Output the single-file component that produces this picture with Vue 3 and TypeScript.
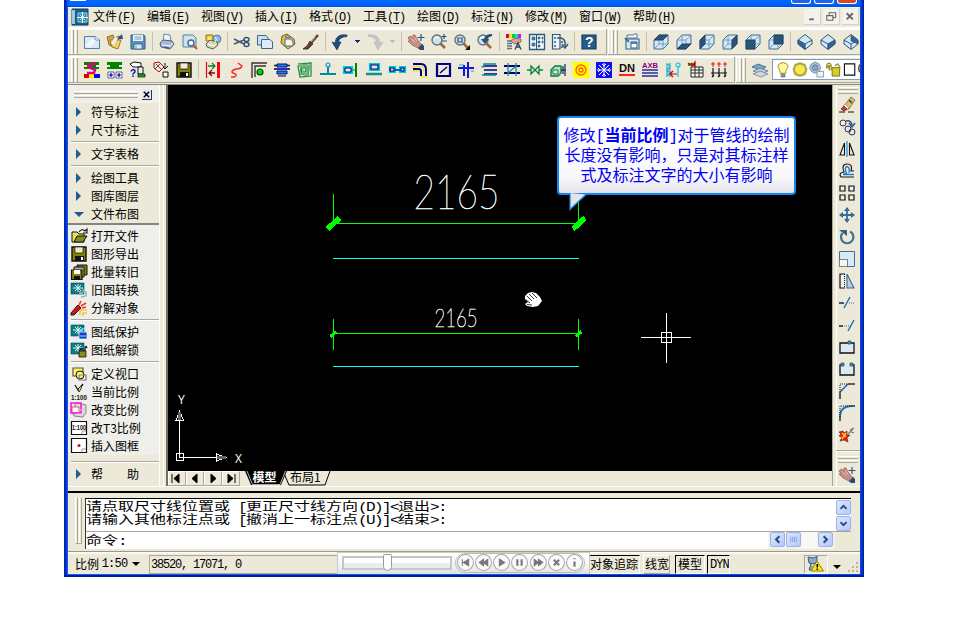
<script setup lang="ts">
import { h } from 'vue'

type Path = [string, string, string?, number?]
type Label = { t: string; x: number; y: number; s: number; f: string }
type Shape = Path | Label

const K = '#111'
const B = '#2c5680'
const N = '#000084'
const C = '#00c8dc'
const G = '#008400'
const T = '#1f8a8a'
const L = '#d5e6f5'
const O = '#848200'
const no = 'none'

const boxBase: Path = ['M1 6L6 1H15V10L10 15H1Z', L, '#3a6d9a', 1]
const boxLines: Path = ['M1 6H10V15M10 6L15 1M6 1V10H15M6 10L1 15', no, '#5f8fb8', 0.8]
const box = (d: string): Shape[] => [boxBase, boxLines, [d, '#2b5478', '#1d4164', 0.8]]
const gem = (d: string): Shape[] => [
  ['M8 0.5L15 6V10L8 15.5L1 10V6Z', L, B, 1],
  ['M1 6L8 10L15 6M8 10V15', no, B, 1],
  [d, '#34658f', B, 0.6],
]
const hand: Shape[] = [
  ['M1 3L3 2L5 5L5 1H7L9 5L13 10L15 11L12 15L8 13L4 11L0 7H2L0 4Z', '#c98f86', '#93564e', 0.7],
  ['M3 4L7 8M6 3L9 7', no, '#efc8bc', 0.8],
  ['M10 14L14 10L16 12V16H12Z', '#264f78'],
  ['M13 0V7M9.5 3.5H16.5', no, B, 1.2],
]
const lens: Shape[] = [
  ['M9 9L14 14', no, '#a06b3d', 2.6],
  ['M1 6A5 5 0 1 0 11 6A5 5 0 1 0 1 6', '#cfe0ec', '#60737e', 1.4],
  ['M3 5Q5 2 8 4', no, '#fff', 1.2],
]
const drawingBase: Shape[] = [
  ['M0 1H13V12H0Z', '#087f84', '#063f60', 0.6],
  ['M2 6H12M7 2V10M4 3L10 9M10 3L4 9', no, '#fff', 0.9],
]

const icons: Record<string, Shape[]> = {
  app: [
    ['M0 0H16V16H0Z', '#17618c', '#173b54', 1],
    ['M0 1H3V15H0Z', '#9fc8dc'],
    ['M6 4H15V13H6Z', '#1a91bd', '#c9eef7', 0.8],
    ['M10.500 3V14M5 8.500H16', no, '#fff', 1.2],
    ['M8 6L13 11M13 6L8 11', no, '#d8f2fa', 0.8],
  ],
  new: [['M0.500 2.500H11L15.500 6V14.500H0.500Z', '#dbe9f5', '#55809f', 1], ['M11 2.500V6H15.500', '#f7fbff', '#55809f', 0.8], ['M1 12L8 4L12 7L6 14Z', '#f0f7fc']],
  open: [['M0 3L6 1L7 4L13 2L9 14L2 11Z', '#d5a43b', '#765b20', 0.8], ['M3 6L14 6L11 15L5 13Z', '#f1ce69', '#765b20', 0.7], ['M10 5L15 0L16 5Z', '#245680'], ['M4 9L8 3L11 4L7 11Z', '#edf4f7']],
  save: [['M1 1H14L15 3V15H1Z', '#5a8fc2', '#315e87', 1], ['M3 1H13V7H3Z', '#e8f3fa'], ['M4 10H12V15H4Z', '#dce9f4', '#315e87', 0.8], ['M4.500 3H11.500M4.500 5H11.500M6 11V15', no, '#5b85a8', 0.8]],
  print: [['M4 7L5 0L11 1L12 7Z', '#e6eef9', '#55708f', 0.8], ['M1 9L4 6L13 7L15 10L11 15L2 13Z', '#aab8d3', '#4d5f81', 1], ['M3 11L11 12L14 9M6 3H10', no, '#fff', 1], ['M5 13L10 14', no, '#3f5d8b', 1.3]],
  preview: [['M1 1H11L14 4V13H1Z', '#cfe2f1', '#55809f', 1], ['M6 9A3 3 0 1 0 12 9A3 3 0 1 0 6 9', '#eff8fd', '#456b86', 1.4], ['M11 11L15 15', no, '#9b613b', 2]],
  publish: [['M1 1H8V7H1Z', '#f8cf20', '#725a1c', 0.8], ['M8 5A4 4 0 1 0 16 5A4 4 0 1 0 8 5', '#86bbdf', '#416b94', 0.8], ['M1 10L5 6L12 8L13 11L8 15L2 13Z', '#dfd6a8', '#555d75', 1], ['M3 10L9 12L11 10M10 3Q13 5 10 8', no, '#fff', 1], ['M3 3L6 6M6 3L3 6', no, '#fff', 0.8]],
  cut: [['M0 5L10 10M0 10L10 6', no, '#46586d', 1.5], ['M10 10.500A2.500 2 0 1 0 15 10.500A2.500 2 0 1 0 10 10.500M10 5.500A2.500 2 0 1 0 15 5.500A2.500 2 0 1 0 10 5.500', no, '#2f4e77', 1.4]],
  copy: [['M0.500 1.500H9L11 4V11H0.500Z', '#cadff0', '#3d6788', 1], ['M4.500 5.500H13L15.500 8V14.500H4.500Z', '#deecf8', '#3d6788', 1]],
  paste: [['M2 2L7 0L14 5L15 10L8 15L1 9Z', '#e5b843', '#74602d', 1], ['M5 5H11L13 8V12H5Z', '#edf5fa', '#4d6f88', 1], ['M5 3L8 1L10 4Z', '#bcc4ce', '#5c5f66', 0.7]],
  brush: [['M15 1L8 9', no, '#5a4b43', 2.6], ['M7 7L10 10L5 15L0 15L4 12Z', '#6a4026', '#3b2418', 0.8], ['M12 3L8 8', no, '#d2b69e', 1]],
  undo: [['M15 1Q4 -1 3 9L0 8L5 16L9 8L6.500 8Q7 3 15 2.500Z', '#214c80', '#19385f', 0.7]],
  redo: [['M1 1Q12 -1 13 9L16 8L11 16L7 8L9.500 8Q9 3 1 2.500Z', '#c2c5c9', '#b7b8b5', 0.6]],
  hand,
  zoomrt: [...lens, ['M13 0V5M10.500 2.500H15.500M11 7H16', no, '#2b557d', 1.2]],
  zoomwin: [...lens, ['M4 4H8V8H4Z', no, '#234f77', 1.2], ['M16 11V16H11Z', K]],
  zoomprev: [...lens, ['M15 0Q8 0 7 5H4L8 10L12 5H10Q11 3 15 2Z', '#244f77']],
  props: [['M0 0H3V4H0Z', '#e00055'], ['M3 0H6V4H3Z', '#e8ed08'], ['M6 0H9V4H6Z', '#0bcf28'], ['M9 0H12V4H9Z', '#09dce4'], ['M12 0H15V4H12Z', '#c020f0'], ['M1 7H6M1 9.500H6M1 12H6M1 14.500H6', no, '#5c738a', 1.4], ['M4 7L9 4L15 5V8L9 10Z', '#dfa094', '#875449', 0.8], ['M9 15.500L12 9L15 15.500M10 13H14', no, '#234e76', 1.4]],
  dcenter: [['M0.500 0.500H15.500V15.500H0.500Z', '#f5f8fa', '#285982', 1.3], ['M3 3H6V6H3ZM3 9H6V12H3ZM9 3H11V5H9ZM13 3H14V5H13ZM9 7H11V9H9ZM13 7H14V9H13ZM9 11H11V13H9Z', '#56829f', '#285982', 0.6], ['M7.500 1V15', no, '#285982', 1]],
  palette: [['M0.500 0.500H8V15H0.500Z', '#eef3f7', '#285982', 1.2], ['M2 3H4V5H2ZM2 7H4V9H2ZM2 11H4V13H2Z', '#5885a3'], ['M5 4H9Q14 5 13 12M10 10L13 14L16 10', no, '#285982', 1.4], ['M9 7H11V9H9ZM9 12H11V14H9Z', '#777']],
  help: [['M1 1H15V15H1Z', '#245d8c', '#173c5c', 1.2], { t: '?', x: 4, y: 13, s: 14, f: '#fff' }],
  viewname: [['M3 1H9L11 0H13V4H3Z', '#f6f8fa', '#446c8b', 0.9], ['M2 5H15V15H2Z', '#d8e7f2', '#2f6289', 1.1], ['M7 8H13V14H7Z', '#fff', '#2f6289', 1], ['M1 4L5 8M7 9H13', no, '#2f6289', 1.7]],
  top: box('M1 6L6 1H15L10 6Z'), bottom: box('M1 15L6 10H15L10 15Z'), left: box('M1 6L6 1V10L1 15Z'),
  right: box('M10 6L15 1V10L10 15Z'), front: box('M1 6H10V15H1Z'), back: box('M6 1H15V10H6Z'),
  isoA: gem('M1 6L8 10V15.500L1 10Z'), isoB: gem('M8 10L15 6V10L8 15.500Z'), isoC: gem('M8 1L15 6V10L8 7Z'),

  sys: [['M0 0H15V3H12V5H15V7H0V5H3V3H0Z', G], ['M0 12H5V16H0Z', '#e00000'], ['M5 12H10V16H5Z', '#ffef00'], ['M10 12H16V16H10Z', '#0808d8'], ['M12 2H6L4 5L11 8L10 11H3', no, '#df0088', 2.4]],
  grpadd: [['M0 0H15V3H12V5H15V7H0V5H3V3H0Z', G], ['M1 10H7V16H1ZM9 10H15V16H9Z', '#fff', N, 0.6], ['M4 11V15M2 13H6M12 11V15M10 13H14', no, N, 1.2]],
  query: [['M0 2L4 0L11 1V5H3Z', '#fff', K, 1], ['M8 5H13V12H8Z', '#eee', K, 1], ['M8 12H15V15H8Z', '#1ba323', K, 0.7], { t: '?', x: 0, y: 15, s: 10, f: '#0000c8' }],
  swap: [['M1 1L6 0L11 5L6 10L1 6Z', no, '#c40000', 1], ['M3 2L8 7M7 2L2 7', no, '#555', 1], ['M12 1V7M10 5L12 7L15 4', no, K, 1], ['M10 10H15V15H10Z', '#f6f5ed', K, 1]],
  disk: [['M1 1H15V15H1Z', O, K, 1.4], ['M4 1H12V7H4Z', '#ece9d8', K, 0.7], ['M4 10H13V15H4Z', K], ['M10 11H12V14H10Z', '#fff']],
  gate: [['M1.500 0V16', no, '#e00018', 1.2], ['M12 0H15V16H12Z', '#ff0018'], ['M3 4H10M7 1L10 4L7 7', no, '#168117', 1.3], ['M10 11H4M7 8L4 11L7 14', no, '#850000', 1.3]],
  snake: [['M10 1L14 4Q13 7 8 7Q2 9 5 11Q11 13 6 15H3', no, '#f52d25', 1.5]],
  corner: [['M1 16V1H16M4 15V4H15', no, '#353535', 1.4], ['M6 10A3 3 0 1 0 12 10A3 3 0 1 0 6 10', '#00d51b', '#004800', 1.2]],
  stack: [['M3 2H13V5H3Z', '#1687ee', N, 1], ['M0 3.500H3M13 3.500H16', no, '#222', 1.3], ['M0 7H16', no, N, 1.6], ['M3 9H13V12H3Z', '#1187e2', '#000a8c', 1], ['M4 14H12', no, '#333', 1.3]],
  coil: [['M1 2L14 1V14L3 15L1 4H11V12H5L4 6H9V10H6', no, '#158932', 1.2], ['M2 2L13 3L11 14L3 12L4 5H9L8 10H6V7', no, '#34a25c', 0.8]],
  tee: [['M0 12H16M8 12V5', no, '#0886a2', 2], ['M6 3A2 2 0 1 0 10 3A2 2 0 1 0 6 3', no, '#0a92d0', 1.2]],
  boxend: [['M1 5H9V11H1Z', no, C, 2.2], ['M2 6H8V10H2Z', no, N, 1], ['M9 8H13', no, '#109cb0', 1.3], ['M13 1V15', no, G, 2]],
  boxline: [['M4 2H13V8H4Z', no, C, 2.2], ['M5 3H12V7H5Z', '#ece9d8', N, 1.1], ['M0 12H16', no, T, 2.5]],
  twobox: [['M1 5H6V10H1ZM11 5H16V10H11ZM6 8H11', no, C, 2.2], ['M1 6H5V9H1ZM12 6H15V9H12ZM6 8H11', no, N, 1.1]],
  elbow: [['M1 2H9Q14 2 14 8V14M1 7H7Q9 7 9 10V14', no, N, 2], ['M0 4.500H9Q12 4.500 12 11M0 9H6M8 15H16', no, '#f4de35', 1.3]],
  diag: [['M2 2H15V14H2Z', no, N, 2.2], ['M5 11L12 5', no, N, 1.5]],
  cross: [['M10 0V16M0 6H16M6 3V14', no, '#1018e0', 2], ['M1 3H6M13 9H16', no, '#2a9bb5', 1]],
  three: [['M3 4H16M3 8H16M3 12H16', no, N, 1.3], ['M1 4A1 1 0 1 0 3 4V2H15M1 13H15', no, '#008a8a', 1.5]],
  crosspipe: [['M0 4H16M0 11H16', no, N, 2], ['M4 1V14M12 1V14M4 11L12 4', no, T, 1.3]],
  valve: [['M0 8H4M12 8H16M4 4L12 12V4L4 12Z', no, '#07803e', 1.3]],
  pump: [['M1 8L5 4H11V11L8 14H1Z', '#b8dfca', '#087f40', 1.4], ['M3 8H8V12H3Z', '#ece9d8', '#087f40', 1], ['M11 8H16M15 2V14M13 4V12', no, '#2a3460', 1.3]],
  ring: [['M0 0H16V16H0Z', '#ffff00'], ['M3 8A5 5 0 1 0 13 8A5 5 0 1 0 3 8M6 8A2 2 0 1 0 10 8A2 2 0 1 0 6 8', no, '#ff5a00', 1.3]],
  snow: [['M0 0H16V16H0Z', '#1010ee'], ['M8 1V15M1 8H15M3 3L13 13M13 3L3 13M6 2L8 4L10 2M6 14L8 12L10 14M2 6L4 8L2 10M14 6L12 8L14 10', no, '#fff', 1]],
  dn: [{ t: 'DN', x: 0, y: 10, s: 11, f: K }, ['M0 13H16', no, '#ff2020', 2]],
  axb: [{ t: 'AXB', x: 0, y: 6, s: 7, f: '#8c0084' }, ['M0 8H16M0 11H16M0 14H16', no, '#2a2aa0', 1.6]],
  wave: [['M2 1V15M5 1V15M3 2L5 5L2 8L5 11L2 14', no, '#21a9c7', 1.2], ['M13 5V15M11 3A2 2 0 1 0 15 3A2 2 0 1 0 11 3', no, C, 1.2], ['M12 12H5M8 9L5 12L8 15', no, '#d00000', 1.2]],
  table: [['M3 5H15V15H3ZM3 8H15M3 11H15M7 5V15M11 5V15', '#f9f9f5', '#292929', 1], ['M0 2H7M0 1L4 4L7 0V4L3 1', no, '#b00000', 1.2], ['M1 1V4', no, G, 1.4]],
  dims: [['M2 0V5M8 0V5M14 0V5M0 2H4M6 2H10M12 2H16', no, '#ef1313', 1], ['M2 6V15M8 6V15M14 6V15M0 11H16M1 15L3 13M7 15L9 13M13 15L15 13', no, K, 1.2]],
  layers: [['M0 5L6 2L14 5L9 8Z', '#7aa8c9', '#325f84', 0.8], ['M1 9L8 6L16 9L9 12Z', '#b9cddb', '#55778f', 0.8], ['M1 12L8 9L16 12L9 15Z', '#ced5d9', '#718692', 0.8]],
  bulb: [['M5 11L4 8Q1 4 4 2Q8 -1 12 2Q15 5 11 9V12H5Z', '#fff8a0', '#9a8c28', 1], ['M6 13H10V16H6Z', '#8c9caa', '#535a5d', 0.7]],
  sun: [['M2 2L8 0L14 2L16 8L14 14L8 16L2 14L0 8Z', '#c0b35a'], ['M2 8A6 6 0 1 0 14 8A6 6 0 1 0 2 8', '#f9e94a', '#8e8c56', 1]],
  freeze: [['M0 6L2 2L6 0L10 2L12 6L10 10L6 12L2 10Z', '#b4c9d7', '#6989a1', 1], ['M3 6A3 3 0 1 0 9 6A3 3 0 1 0 3 6', '#86a9c3', '#587e9d', 1], ['M8 10H15V16H8Z', '#eff5f6', '#87999b', 1]],
  unlock: [['M6 6H14V15H6Z', '#d4cf29', '#74701c', 1], ['M5 9V4Q4 0 1 2Q0 3 0 6H2V4H3V9M9 4L12 2L14 5V8', no, '#99952b', 1.5]],
  square: [['M1 2H12V14H1Z', '#fff', '#111', 1.2]],

  folder: [['M1 4H6L8 6H13V14H1Z', '#e7e45e', K, 1], ['M3 14L6 8H16L12 14Z', '#8b8c18', K, 1], ['M8 4Q11 0 14 3L16 1V5H12', no, K, 1.1]],
  disks: [['M6 1H16V11H6Z', O, K, 1], ['M3 3H13V13H3Z', '#aaa', K, 1], ['M0.500 6H11V15.500H0.500Z', O, K, 1.2], ['M3 6H9V10H3Z', '#fff'], ['M3 12H9V15H3Z', K]],
  convert: [...drawingBase, ['M9 11Q13 12 12 7M9 9V12H12M15 9V14L10 15', no, '#8eb7c2', 1.5]],
  explode: [['M0 13L7 5L10 8L3 15L0 15Z', '#d01313', '#191919', 1], ['M8 5L10 1M10 6L15 3M11 8L15 7', no, '#ff2e17', 1.5], ['M9 15V10H16M12 16V13H16', no, '#ffb000', 1.2]],
  protect: [...drawingBase, ['M8 8H16V15H8Z', '#183dce', '#eef9ff', 0.8], ['M10 8V6Q12 3 14 6V8M9 12H15', no, '#76ecff', 1.1]],
  unprotect: [...drawingBase, ['M8 9H15V15H8Z', '#8b8b14', K, 0.8], ['M9 9V7H12M14 9V6Q15 3 16 6', no, K, 1.3]],
  viewport: [['M2 2H12V10H2Z', '#fff65a', '#555', 1.2], ['M5 9A4 4 0 1 0 13 9A4 4 0 1 0 5 9', '#fff56c', K, 1], ['M8 9H15V14H8Z', no, '#777', 1.2]],
  curscale: [['M4 1L7 6L12 0', no, K, 1.2], ['M7 5L11 1L10 5L8 8Z', '#e5e144', K, 0.8], { t: '1:100', x: 0, y: 15.5, s: 8, f: K }],
  chgscale: [['M4 2L7 1L15 3V11L12 15L3 14L1 10L5 8L4 4Z', '#dedbd7', '#898580', 1], ['M1 5H8V11H1Z', '#fff', '#d33', 0.8], ['M0 1H10V11H0Z', no, '#ff10e8', 1.6], ['M6 8H14M6 12H13', no, '#ccc', 1]],
  t3scale: [['M0.500 1.500H15.500V14.500H0.500Z', '#fff', K, 1.2], { t: '1:100', x: 1, y: 9.5, s: 7.5, f: K }, ['M11 14V11H15', no, '#888', 0.8]],
  frame: [['M0.500 0.500H15.500V14.500H0.500Z', '#fff', K, 1.2], ['M6.500 7.500A1.500 1.500 0 1 0 9.500 7.500A1.500 1.500 0 1 0 6.500 7.500', '#9e2720'], ['M11 14V11H15', no, '#888', 0.8]],

  erase: [['M5 9L12 0L16 3L10 12L6 13Z', '#f1bd49', '#72645a', 0.8], ['M4 9L6 7L10 11L7 13Z', '#fff', '#777', 0.6], ['M2 12L5 9L8 12L5 14Z', '#d53d2e', '#742018', 0.8], ['M10 3L13 6', no, '#2762aa', 2], ['M0 15H6M9 15H15', no, K, 1.2]],
  dup: [['M1 4A3 3 0 1 0 7 4A3 3 0 1 0 1 4', '#e9f1f5', '#363636', 1], ['M6 10A3 3 0 1 0 12 10A3 3 0 1 0 6 10M10 13A3 3 0 1 0 16 13A3 3 0 1 0 10 13', '#dce6ec', '#333', 1], ['M7 2Q12 1 13 6M10 4L13 8L16 4', no, '#28598a', 1.5]],
  mirror: [['M5.500 2V14H1Z', '#f4f7f9', K, 1.1], ['M10.500 2V14H15Z', '#e6ebee', K, 1.1], ['M8 0V16', no, '#198ae5', 1.2]],
  offset: [['M15 14H2Q-1 10 5 9Q2 1 8 1Q14 1 12 8H15', '#eef2f4', K, 1.2], ['M15 11.500H4.500Q4 10.500 7.500 10.500Q5 4 8 3.500Q11 4 10 10', no, '#2774bb', 1.3]],
  array: [['M1 1H6V6H1ZM10 1H15V6H10ZM1 10H6V15H1ZM10 10H15V15H10Z', '#e8f0f6', K, 1.2]],
  move: [['M8 1V15M1 8H15', no, '#396b98', 1.8], ['M8 0L11 4H5ZM8 16L11 12H5ZM0 8L4 5V11ZM16 8L12 5V11Z', '#396b98']],
  rotate: [['M3.500 4A6.200 6.200 0 1 0 11 2.500', no, '#456f93', 2.2], ['M0 1H8V7Z', '#345f85']],
  scale: [['M0.500 0.500H15.500V15.500H0.500Z', '#d8e8f4', '#3f7198', 1], ['M0 8.500H8.500V16H0Z', '#f8f7ee']],
  stretch: [['M6 1H1V15H6', '#f0f0ec', K, 1.2], ['M8 1L15 15H8Z', '#b9cfe0', '#396b98', 1.1]],
  trim: [['M0 8H5', no, K, 1.4], ['M5 13L11 2', no, '#1f6fad', 1.4]],
  extend: [['M0 9H4', no, K, 1.4], ['M9 14L15 3', no, '#1f6fad', 1.4]],
  breakpt: [['M1 4H15V14H1Z', '#dce9f2', K, 1.3], ['M9 2H12V5H9Z', '#4d7da4', '#315d82', 0.8]],
  brk: [['M4 4H1V14H15V4H12', '#dce9f2', K, 1.3], ['M2 2H5V5H2ZM11 2H14V5H11Z', '#4d7da4', '#315d82', 0.8]],
  chamfer: [['M1 16V9', no, K, 1.3], ['M1 9L9 1', no, '#1b72b8', 1.7], ['M9 1H16', no, K, 1.3]],
  fillet: [['M1 16V12', no, K, 1.3], ['M1 12Q1 1 13 1', no, '#1d7ac2', 2], ['M13 1H16', no, K, 1.3]],
  burst: [['M0 5L4 4L5 6L8 4L8 8L11 8L8 11L9 15L5 13L1 14L3 10L0 9L2 7Z', '#e11d11', '#761415', 0.6], ['M3 6L7 10M7 6L3 12', no, '#ffcf23', 1.6], ['M9 7L14 2M11 3L15 1M12 5L15 6', no, '#777', 1.2]],
}

const dashes: Record<string, [string, string]> = {
  scale: ['M0.500 8.500H8.500V15.500H0.500Z', '#111'], stretch: ['M5.500 1V15', '#111'], trim: ['M10 8H16', '#1f6fad'], extend: ['M5 9H12', '#1f6fad'],
  chamfer: ['M1 9V1H9', '#111'], fillet: ['M1 12V1H13', '#111'],
}

const Ico = (p: { n: string }) =>
  h('svg', { class: 'ico', viewBox: '0 0 16 16' }, [
    ...icons[p.n].map((s) =>
      Array.isArray(s)
        ? h('path', { d: s[0], fill: s[1], stroke: s[2] ?? 'none', 'stroke-width': s[3] ?? 1 })
        : h('text', { x: s.x, y: s.y, fill: s.f, 'font-size': s.s, 'font-weight': 700, 'font-family': 'Liberation Sans, sans-serif', ...(s.t.length > 1 ? { textLength: 16 - s.x * 2, lengthAdjust: 'spacingAndGlyphs' } : {}) }, s.t),
    ),
    dashes[p.n] ? h('path', { d: dashes[p.n][0], fill: 'none', stroke: dashes[p.n][1], 'stroke-dasharray': '1 1' }) : null,
  ])
Ico.props = ['n']

const menus = [['文件', 'F'], ['编辑', 'E'], ['视图', 'V'], ['插入', 'I'], ['格式', 'O'], ['工具', 'T'], ['绘图', 'D'], ['标注', 'N'], ['修改', 'M'], ['窗口', 'W'], ['帮助', 'H']]
const standard = 'new open save | print preview publish | cut copy paste brush | undo v redo w | hand zoomrt zoomwin zoomprev | props dcenter palette | help'.split(' ')
const views = 'viewname | top bottom left right front back | isoA isoB isoC'.split(' ')
const pipes = 'sys grpadd query swap disk | gate snake corner stack coil tee boxend boxline twobox elbow diag cross three crosspipe valve pump ring snow dn axb wave table dims'.split(' ')
const modify = 'erase dup mirror offset array move rotate scale stretch trim extend breakpt brk chamfer fillet burst'.split(' ')
const layerState = ['bulb', 'sun', 'freeze', 'unlock', 'square']

const groups = [['符号标注', '尺寸标注'], ['文字表格'], ['绘图工具', '图库图层', '文件布图']]
const commands: string[][][] = [
  [['folder', '打开文件'], ['disk', '图形导出'], ['disks', '批量转旧'], ['convert', '旧图转换'], ['explode', '分解对象']],
  [['protect', '图纸保护'], ['unprotect', '图纸解锁']],
  [['viewport', '定义视口'], ['curscale', '当前比例'], ['chgscale', '改变比例'], ['t3scale', '改T3比例'], ['frame', '插入图框']],
]
const nav = ['M4 3V12M11 3V12L6 7.500Z', 'M11 3V12L6 7.500Z', 'M7 3V12L12 7.500Z', 'M6 3V12L11 7.500ZM13 3V12']
const media = [
  'M5 5V11M11 5V11L6 8Z', 'M8 5V11L4 8ZM12 5V11L8 8Z', 'M6 5V11L11 8Z', 'M6 5V11M10 5V11',
  'M4 5V11L8 8ZM8 5V11L12 8Z', 'M5.500 5.500L10.500 10.500M10.500 5.500L5.500 10.500', 'M8 7V12M8 4V5',
]
</script>

<template>
  <div class="window">
    <header class="title"><i class="docicon"></i><span class="caps"><i></i><i></i><i class="x"></i></span></header>
    <div class="inner">
      <nav class="menu">
        <Ico n="app" class="appicon" />
        <span v-for="m in menus" :key="m[1]" class="mi">{{ m[0] }}<span class="en">(<u>{{ m[1] }}</u>)</span></span>
        <span class="mdi">
          <svg viewBox="0 0 16 16"><path d="M5 11H10" /></svg>
          <svg viewBox="0 0 16 16"><path d="M6 6V4H13V9H10M3.500 7H10V12H3.500Z" class="thin" /></svg>
          <svg viewBox="0 0 16 16"><path d="M4.500 4.500L11 11M11 4.500L4.500 11" /></svg>
        </span>
      </nav>

      <div class="row">
        <div class="bar std">
          <i class="grip"></i>
          <template v-for="(n, i) in standard" :key="i">
            <i v-if="n === '|'" class="sep"></i>
            <i v-else-if="n === 'v' || n === 'w'" class="drop" :class="{ off: n === 'w' }"></i>
            <span v-else class="cell"><Ico :n="n" /></span>
          </template>
        </div>
        <div class="bar rest">
          <i class="grip"></i>
          <template v-for="(n, i) in views" :key="i">
            <i v-if="n === '|'" class="sep"></i>
            <span v-else class="cell"><Ico :n="n" /></span>
          </template>
        </div>
      </div>

      <div class="row second">
        <div class="bar pipes">
          <i class="grip"></i>
          <template v-for="(n, i) in pipes" :key="i">
            <i v-if="n === '|'" class="sep"></i>
            <span v-else class="cell"><Ico :n="n" /></span>
          </template>
        </div>
        <div class="bar rest">
          <i class="grip"></i>
          <span class="cell"><Ico n="layers" /></span>
          <span class="combo"><Ico v-for="n in layerState" :key="n" :n="n" /><span>0</span></span>
        </div>
      </div>

      <div class="work">
        <aside class="side">
          <div class="sidehead"><i class="hgrip"></i><span class="close"><svg viewBox="0 0 10 10"><path d="M2 2L8 8M8 2L2 8" /></svg></span></div>
          <template v-for="(g, gi) in groups" :key="gi">
            <i v-if="gi" class="hsep"></i>
            <div v-for="t in g" :key="t" class="item"><span class="mark"><i class="tri" :class="{ down: t === '文件布图' }"></i></span>{{ t }}</div>
          </template>
          <div class="sub">
            <template v-for="(g, gi) in commands" :key="gi">
              <i v-if="gi" class="hsep"></i>
              <div v-for="t in g" :key="t[0]" class="item"><span class="mark"><Ico :n="t[0]" /></span>{{ t[1] }}</div>
            </template>
          </div>
          <i class="hsep tall"></i>
          <div class="item help"><span class="mark"><i class="tri"></i></span><span>帮</span><span>助</span></div>
        </aside>

        <main class="center">
          <div class="stage">
            <svg class="drawing" viewBox="168 85 664 386">
              <g class="green">
                <path d="M333.500 194V223M578.500 200V223M333 223.500H579" />
                <path d="M327.500 229L339.500 218M573 229L585 218" class="tick" />
                <path d="M333.500 319V350M578.500 319V350M333 333.500H579" />
                <path d="M330.500 336.500L336 331.500M576 336.500L581.500 331.500" class="tick small" />
              </g>
              <path d="M333 258.500H579M333 366.500H579" class="cyan" />
              <text x="413.500" y="209" textLength="86" lengthAdjust="spacingAndGlyphs" class="num">2165</text>
              <text x="434.500" y="327" textLength="43" lengthAdjust="spacingAndGlyphs" class="num sm">2165</text>
              <g class="white">
                <path d="M666.500 313V332M666.500 343V363M641 337.500H661M672 337.500H691M661.500 332.500H671.500V342.500H661.500ZM661 337.500H672M666.500 332V343" />
                <path d="M179.500 453V420M183 457.500H216M176.500 453.500H183.500V460.500H176.500ZM179.500 454V457.500H183M179.500 411L176 420.500H183.500ZM226 457.500L216.500 454V461Z" />
              </g>
              <path d="M179.500 412V420M217 457.500H226" class="grey" />
              <text x="178" y="403.500" class="axis">Y</text>
              <text x="235" y="462.500" class="axis">X</text>
              <path d="M525 296L528 293L532 292L536 293L540 297L542 301L538 306L533 307L527 306L525 304L528 302L525 299Z" class="palm" />
              <path d="M527 296L532 301M529 294L534 299M532 293L537 298M526 300L530 303M527 304.500L532 305" class="lines" />
            </svg>
            <div class="tip">
              <p>修改<span class="br">[</span><b>当前比例</b><span class="br">]</span>对于管线的绘制</p>
              <p>长度没有影响，只是对其标注样</p>
              <p>式及标注文字的大小有影响</p>
              <svg class="tail" viewBox="0 0 18 18"><path d="M1 0V16.500L17 1.500" /></svg>
            </div>
          </div>
          <div class="tabs">
            <span v-for="d in nav" :key="d" class="navb"><svg viewBox="0 0 18 15"><path :d="d" /></svg></span>
            <svg class="sheets" viewBox="0 0 92 15">
              <path d="M40 0L46 14H82L87 0" class="sheet" />
              <path d="M2 0L8 14H38L44 0Z" class="active" />
              <path d="M4 0L9.500 13.500H37L42.500 0" class="outline" />
              <text x="9.500" y="11" class="on">模型</text><text x="47" y="11">布局1</text>
            </svg>
          </div>
        </main>

        <aside class="modify">
          <i class="hgrip"></i>
          <span v-for="n in modify" :key="n" class="vcell"><Ico :n="n" /></span>
          <i class="vline"></i>
          <i class="hgrip"></i>
          <span class="vcell pan"><Ico n="hand" /></span>
        </aside>
      </div>

      <section class="cmd">
        <i class="grip"></i>
        <div class="cmdbox">
          <div class="hist">
            <div class="log">
              <p>请点取尺寸线位置或<span class="en"> [</span>更正尺寸线方向<span class="en">(D)]&lt;</span>退出<span class="en">&gt;:</span></p>
              <p>请输入其他标注点或<span class="en"> [</span>撤消上一标注点<span class="en">(U)]&lt;</span>结束<span class="en">&gt;:</span></p>
            </div>
            <div class="vs">
              <span class="sb"><svg viewBox="0 0 14 15"><path d="M3.500 9L7 5.500L10.500 9" /></svg></span>
              <span class="sb"><svg viewBox="0 0 14 15"><path d="M3.500 6L7 9.500L10.500 6" /></svg></span>
            </div>
          </div>
          <div class="prompt">
            <p>命令<span class="en">:</span></p>
            <div class="hs">
              <span class="sb"><svg viewBox="0 0 14 14"><path d="M9 3.500L5.500 7L9 10.500" /></svg></span>
              <span class="sb thumb"><svg viewBox="0 0 14 14"><path d="M4 4V10M6 4V10M8 4V10M10 4V10" /></svg></span>
              <i class="track"></i>
              <span class="sb"><svg viewBox="0 0 14 14"><path d="M5 3.500L8.500 7L5 10.500" /></svg></span>
            </div>
          </div>
        </div>
      </section>

      <footer class="status">
        <span class="ratio">比例 <span class="en">1:50</span><i></i></span>
        <span class="coords en">38520, 17071, 0</span>
        <div class="player">
          <span class="slider"><i></i></span>
          <span class="pill">
            <svg v-for="(d, i) in media" :key="i" viewBox="0 0 16 16"><circle cx="8" cy="8" r="7.500" /><path :d="d" :class="{ fat: i === 3 || i > 4 }" /></svg>
          </span>
        </div>
        <span class="mode on w1">对象追踪</span>
        <span class="mode w2">线宽</span>
        <span class="mode on w3">模型</span>
        <span class="mode on w4 en">DYN</span>
        <span class="tray">
          <svg viewBox="0 0 20 16"><path d="M3 1L9 2L12 0V5L9 8L4 7ZM6 8L4 14H11" class="dish" /><path d="M12 5L18.500 15H6Z" class="warn" /><path d="M12.300 8V11.500M12.300 12.500V14" class="bang" /></svg>
        </span>
        <i class="more"></i>
        <svg class="size" viewBox="0 0 12 12"><path d="M9 1H11V3H9ZM5 5H7V7H5ZM9 5H11V7H9ZM1 9H3V11H1ZM5 9H7V11H5ZM9 9H11V11H9Z" /></svg>
      </footer>
    </div>
  </div>
</template>

<style>
body { background: #fff; overflow: hidden; }
</style>

<style scoped>
* { box-sizing: border-box; }
p { margin: 0; }
i { font-style: normal; flex: none; }
svg { flex: none; display: block; }
.window { width: 800px; height: 577px; margin-left: 64px; padding: 0 4px 3px; background: linear-gradient(90deg, #001eb0 0, #0030c8 2px, #1262ec 4px, #0a50e0 796px, #0034c8 798px, #001a9c 800px); box-shadow: inset 0 -2px #0018a8; font: 12px/18px "Noto Sans CJK SC", sans-serif; color: #000; }
.title { height: 7px; background: linear-gradient(#0068ff, #0063fa 70%, #004ad8); display: flex; justify-content: space-between; }
.docicon { width: 16px; height: 1px; margin-left: 2px; background: #fff; }
.caps { display: flex; gap: 3px; margin-right: 3px; }
.caps i { width: 20px; height: 4px; border: 1px solid #fff; border-top: 0; border-radius: 0 0 3px 3px; background: #2465e8; }
.caps .x { background: #d84a20; }
.inner { width: 792px; height: 567px; background: #ece9d8; overflow: hidden; display: flex; flex-direction: column; }
.ico { width: 16px; height: 16px; overflow: visible; }
.en { font-family: "Liberation Mono", monospace; font-size: 12px; letter-spacing: -1.2px; white-space: pre; }

.menu { height: 20px; flex: none; display: flex; align-items: center; padding-left: 4px; border-top: 1px solid #f6f4ec; padding-bottom: 1px; }
.appicon { margin-right: 5px; }
.mi { width: 54px; white-space: nowrap; line-height: 18px; }
.mi u { text-underline-offset: 2px; }
.mdi { display: flex; gap: 2px; margin-left: auto; margin-right: 1px; }
.mdi svg { width: 17px; height: 16px; background: #f3f2ec; border-right: 1px solid #d5d2c4; border-bottom: 1px solid #d5d2c4; }
.mdi path { fill: none; stroke: #666; stroke-width: 2; }
.mdi .thin { stroke-width: 1.2; }

.row { height: 29px; flex: none; display: flex; border-top: 2px solid #fff; }
.second { height: 28px; border-top-width: 1px; }
.bar { flex: none; height: 26px; display: flex; align-items: center; border-bottom: 1px solid #aca899; border-right: 1px solid #aca899; box-shadow: inset 1px 1px #fff; padding-left: 3px; }
.std { width: 539px; }
.pipes { width: 667px; }
.rest { flex: 1; border-right: 0; margin-left: 1px; overflow: hidden; }
.grip { width: 7px; height: 24px; margin-right: 2.5px; border-left: 1px solid #fff; border-right: 1px solid #aca899; background: linear-gradient(90deg, #ece9d8 1px, #aca899 1px 2px, #ece9d8 2px 3px, #fff 3px 4px, #ece9d8 4px); }
.cell { width: 23px; height: 24px; flex: none; display: flex; align-items: center; justify-content: center; }
.sep { width: 1px; height: 19px; margin: 0 3px 0 2px; background: #c5c2b2; }
.drop { width: 12px; height: 4px; background: linear-gradient(#16237f, #16237f) 3px 0 / 5px 1px no-repeat, linear-gradient(#16237f, #16237f) 4px 1px / 3px 1px no-repeat, linear-gradient(#16237f, #16237f) 5px 2px / 1px 1px no-repeat; }
.off { opacity: .22; }
.combo { height: 21px; width: 110px; flex: none; border: 1px solid #7f9db9; background: #fff; display: flex; align-items: center; padding-left: 2px; gap: 1px; }
.combo .ico { width: 16px; height: 15px; }
.combo > span { font-family: "Liberation Mono", monospace; margin-left: -2px; }

.work { height: 403px; flex: none; display: flex; border-top: 1px solid #8b897e; border-bottom: 1px solid #fff; }
.side { width: 91px; flex: none; padding-left: 3px; background: #ece9d8; }
.sidehead { height: 18px; display: flex; align-items: center; padding-left: 3px; gap: 4px; background: #f1efea; margin-left: -3px; padding-top: 1px; }
.hgrip { display: block; height: 7px; width: 64px; border-top: 1px solid #fff; border-bottom: 1px solid #aca899; background: linear-gradient(#ece9d8 1px, #aca899 1px 2px, #ece9d8 2px 3px, #fff 3px 4px, #ece9d8 4px); }
.sidehead .hgrip { margin-left: 3px; }
.close { width: 10px; height: 10px; border: 1px solid #334; border-width: 0 1px 1px 0; background: #dfe8f4; }
.close svg { width: 9px; height: 9px; }
.close path { stroke: #000; stroke-width: 1.6; fill: none; }
.item { height: 18px; display: flex; align-items: center; line-height: 18px; white-space: nowrap; }
.mark { width: 20px; display: flex; }
.tri { width: 0; height: 0; margin-left: 5px; border: 5px solid transparent; border-left: 5px solid #235b90; border-right: 0; }
.tri.down { margin-left: 3px; border: 5px solid transparent; border-top: 5px solid #235b90; border-bottom: 0; }
.hsep { display: block; height: 6px; background: linear-gradient(transparent 2px, #aca899 2px 3px, #fff 3px 4px, transparent 4px); }
.tall { height: 10px; background-position: 0 4px; background-repeat: no-repeat; }
.sub { margin-left: -3px; padding: 2px 0 0 3px; background: #eeeeea; border-top: 2px solid #87857a; height: 232px; }
.help span:nth-child(2) { width: 36px; }

.center { width: 673px; flex: none; display: flex; flex-direction: column; padding-left: 9px; background: linear-gradient(90deg, #fff 1px, #ece9d8 1px 4px, #fff 4px 5px, #ece9d8 5px 7px, #716f64 7px 9px, #ece9d8 9px); border-right: 0; }
.stage { height: 386px; position: relative; background: #000; flex: none; }
.drawing { width: 664px; height: 386px; }
.drawing path { fill: none; shape-rendering: crispEdges; }
.green path { stroke: #0f0; }
.green .tick { stroke-width: 5.5; }
.green .small { stroke-width: 3; }
.cyan { stroke: #0ff; }
.white path { stroke: #fff; }
.drawing .grey { stroke: #666; stroke-width: 3; }
.num { font: 100 47px Lato, sans-serif; fill: #fff; stroke: #fff; stroke-width: .55; }
.sm { font-size: 25px; font-weight: 100; stroke-width: .6; }
.axis { font: 12px/1 "Open Sans", sans-serif; fill: #fff; }
.drawing .palm { fill: #fff; shape-rendering: auto; }
.drawing .lines { stroke: #000; stroke-width: .8; shape-rendering: auto; }
.tip { position: absolute; left: 389px; top: 31px; width: 239px; height: 79px; padding-top: 6px; border: 2px solid #1484f2; border-radius: 4px; background: linear-gradient(#fff, #f8f8fb 80%, #e2e2e8); color: #0000f4; font-size: 16px; line-height: 20px; text-align: center; white-space: nowrap; }
.tip p { height: 20px; }
.br { font-family: "Liberation Mono", monospace; display: inline-block; width: 9px; line-height: 16px; }
.tail { position: absolute; left: 10px; top: 75px; width: 18px; height: 18px; }
.tail path { fill: #e4e4e8; stroke: #1484f2; stroke-width: 1.3; }
.tabs { height: 15px; display: flex; }
.navb { width: 18px; height: 15px; border-right: 1px solid #aca899; border-bottom: 1px solid #aca899; border-top: 1px solid #fff; box-shadow: inset 1px 0 #fff; }
.navb svg { width: 18px; height: 15px; margin-top: -1px; }
.navb path { stroke: #000; stroke-width: 1; fill: #000; }
.sheets { width: 92px; height: 15px; margin-left: 3px; overflow: visible; position: relative; }
.sheets text { font: 12px "Noto Sans CJK SC", sans-serif; }
.sheets .on { fill: #fff; font-weight: 700; }
.sheet { fill: #ece9d8; stroke: #000; }
.active { fill: #000; }
.outline { fill: none; stroke: #fff; stroke-width: .7; }
.modify { width: 28px; flex: none; padding: 2px 0 0 4px; border-left: 1px solid #aca899; box-shadow: inset 3px 0 #ece9d8, inset 4px 0 #fff; }
.modify .hgrip { width: 20px; margin-left: 1px; }
.vcell { height: 22px; width: 20px; display: flex; align-items: center; justify-content: center; }
.vline { display: block; height: 2px; margin: 4px 0 4px -1px; border-top: 1px solid #aca899; background: #fff; }
.pan { margin-top: 1px; }

.cmd { height: 60px; flex: none; margin-top: 4px; padding: 5px 9px 0 7px; display: flex; border-top: 2px solid #000; background: #ece9d8; }
.cmd .grip { height: 46px; border-bottom: 1px solid #aca899; margin-right: 3px; }
.cmdbox { flex: 1; border-left: 1px solid #333; border-top: 1px solid #000; height: 51px; }
.hist { height: 33px; display: flex; justify-content: space-between; background: #fff; border-bottom: 1px solid #aca899; padding-top: 1px; }
.log, .prompt p { line-height: 13px; transform: scaleX(1.3333); transform-origin: 0 0; white-space: nowrap; }
.log { width: 400px; flex: none; margin-top: -1px; }
.log p { height: 13px; }
.vs { width: 15px; display: flex; flex-direction: column; gap: 1px; }
.sb { width: 15px; height: 15px; flex: none; border: 1px solid #9cb3ea; border-radius: 2px; background: linear-gradient(135deg, #dbe6ff, #b5c9fb); }
.sb svg { width: 13px; height: 13px; }
.sb path { fill: none; stroke: #30497d; stroke-width: 2.2; }
.thumb path { stroke: #86a3e6; stroke-width: 1; }
.prompt { height: 17px; display: flex; background: #fff; justify-content: space-between; width: 749px; }
.prompt p { padding-top: 1px; }
.hs { display: flex; gap: 1px; background: #f3f2ec; padding-left: 2px; }
.hs .sb:last-child { margin-right: 2px; }
.track { width: 15px; background: #f8f8f4; }

.status { height: 25px; flex: none; display: flex; align-items: center; border-top: 1px solid #9b988b; background: linear-gradient(#fff, #ece9d8 3px); }
.ratio { width: 81px; flex: none; padding-left: 7px; display: flex; align-items: center; white-space: pre; }
.ratio .en { letter-spacing: -.8px; }
.ratio i { margin-left: 5px; border: 4px solid transparent; border-top-color: #000; border-bottom: 0; }
.coords { width: 188px; flex: none; height: 19px; border: 1px solid #aca899; border-right: 0; line-height: 18px; padding-left: 1px; letter-spacing: -1.2px; font-size: 12px; }
.player { width: 253px; flex: none; height: 24px; display: flex; align-items: center; justify-content: space-between; padding: 0 4px 3px; background: linear-gradient(#fff, #f2f2f2 60%, #dedede); border: 1px solid #ccc; }
.slider { width: 110px; height: 14px; border: 2px solid #c2c7c7; background: linear-gradient(#fff 50%, #e8eded 50%); }
.slider i { display: block; width: 9px; height: 17px; margin: -4px 0 0 39px; border: 1px solid #999; border-radius: 2px 2px 5px 5px; background: #fff; }
.pill { height: 20px; width: 130px; border: 1px solid #bbb; border-radius: 10px; display: flex; justify-content: space-between; align-items: center; padding: 0 1px; }
.pill svg { width: 17px; height: 17px; }
.pill circle { fill: #fafafa; stroke: #a5a9a9; }
.pill path { fill: #777; stroke: #777; stroke-width: 1; }
.pill .fat { stroke-width: 2; }
.mode { height: 19px; flex: none; line-height: 16px; padding-left: 1px; border: 1px solid #aca899; border-left-color: #fff; border-top-color: #fff; white-space: nowrap; }
.mode.on { border-color: #000 #fff #fff #000; }
.mode.w1 { width: 50px; border-left: 0; padding-left: 0; }
.w2 { width: 27px; margin-left: 3px; }
.w3 { width: 30px; margin-left: 5px; padding-left: 2px; }
.w4 { width: 23px; margin-left: 2px; padding-left: 2px; letter-spacing: -1px; line-height: 18px; }
.tray { width: 24px; height: 19px; margin-left: auto; border: 1px solid #aca899; border-right-color: #fff; border-bottom-color: #fff; }
.tray svg { width: 20px; height: 16px; }
.dish { fill: #8eaac9; stroke: #38587d; }
.warn { fill: #ffe416; stroke: #9c8300; }
.bang { stroke: #000; stroke-width: 1.5; }
.more { margin: 5px 6px 0 5px; border: 4px solid transparent; border-top-color: #000; border-bottom: 0; }
.size { width: 12px; height: 12px; margin: 6px 1px 0 0; }
.size path { fill: #b8b4a2; }
</style>
